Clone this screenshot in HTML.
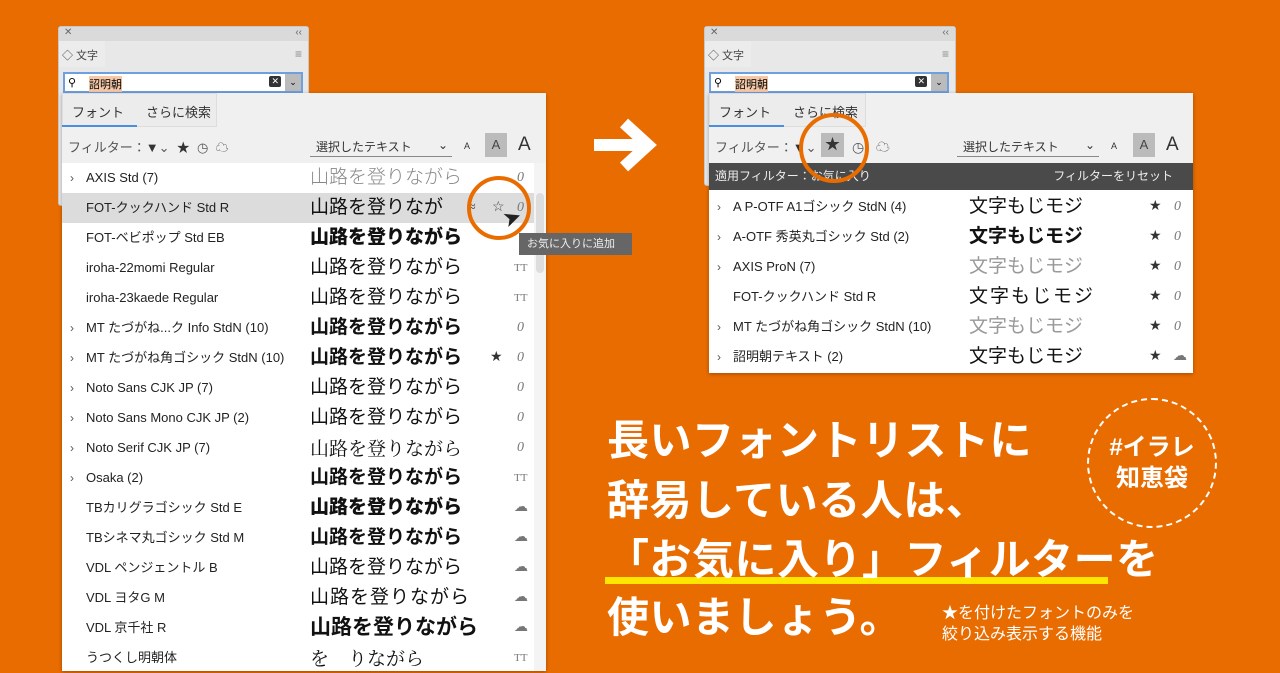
<!DOCTYPE html>
<html><head><meta charset="utf-8"><style>
*{box-sizing:border-box;margin:0;padding:0}
body{width:1280px;height:671px;overflow:hidden;background:#e96c00;font-family:"Liberation Sans","Noto Sans CJK JP",sans-serif;position:relative}
.abs{position:absolute}
.panel{position:absolute;background:#e8e8e8;border:1px solid #c8c8c8;border-radius:3px}
.tbar{height:14px;background:#dadada;font-size:10px;color:#666}
.tab{position:absolute;left:0;top:14px;width:46px;height:26px;background:#ececec;font-size:11px;color:#444;padding:6px 3px;white-space:nowrap}
.search{position:absolute;left:4px;top:45px;width:240px;height:21px;background:#fff;border:2px solid #6ea0e0;font-size:11px}
.pop{position:absolute;background:#f0f0f0;box-shadow:0 1px 4px rgba(0,0,0,.3)}
.row{position:absolute;left:0;height:30px;width:100%;font-size:13px;color:#222;line-height:30px}
.row .ch{position:absolute;left:8px;color:#555;font-size:12px}
.row .nm{position:absolute;left:24px}
.row .sm{position:absolute;font-size:19px;color:#111}
.row .ic{position:absolute;font-size:14px;color:#777;font-style:italic;font-family:"Liberation Serif",serif}
.big{position:absolute;left:607px;color:#fff;font-weight:bold;font-size:42px;line-height:60px;letter-spacing:0.5px;white-space:nowrap}
</style></head><body>

<!-- LEFT -->
<div class="panel" style="left:58px;top:26px;width:251px;height:180px">
 <div class="tbar"><span style="position:absolute;left:5px;top:0">✕</span><span style="position:absolute;right:6px;top:0">‹‹</span></div>
 <div class="tab">◇ 文字</div>
 <div class="abs" style="right:6px;top:20px;color:#888;font-size:12px">≡</div>
 <div class="search"><span style="position:absolute;left:3px;top:2px">⚲</span><span style="position:absolute;left:24px;top:2px;background:#f4c8a8">詔明朝</span><span style="position:absolute;right:20px;top:2px;background:#333;color:#fff;font-size:9px;padding:0 2px;border-radius:2px">✕</span><span style="position:absolute;right:0;top:0;width:16px;height:17px;background:#bbb;font-size:9px;text-align:center;line-height:17px">⌄</span></div>
</div>
<div class="pop" style="left:62px;top:93px;width:484px;height:578px">
 <div class="abs" style="left:0;top:0;width:155px;height:34px;border:1px solid #ddd;background:#ececec"></div>
 <div class="abs" style="left:10px;top:9px;font-size:13px;color:#333">フォント</div>
 <div class="abs" style="left:84px;top:9px;font-size:13px;color:#333">さらに検索</div>
 <div class="abs" style="left:0;top:32px;width:75px;height:2px;background:#4a8ee0"></div>
 <div class="abs" style="left:6px;top:44px;font-size:13px;color:#555">フィルター：<b style="color:#333">▼</b>⌄ &nbsp;<span style="color:#333">★</span> &nbsp;◷ &nbsp;☁</div>
 <div class="abs" style="left:248px;top:42px;width:142px;height:22px;border-bottom:1px solid #888;font-size:12px;color:#333;padding-top:3px;padding-left:6px">選択したテキスト<span style="float:right;margin-right:4px">⌄</span></div>
 <div class="abs" style="left:402px;top:48px;font-size:9px;color:#333">A</div>
 <div class="abs" style="left:423px;top:40px;width:22px;height:24px;background:#bbb;font-size:13px;color:#444;text-align:center;line-height:24px">A</div>
 <div class="abs" style="left:456px;top:41px;font-size:19px;color:#333">A</div>
 <div class="abs" style="left:0;top:70px;width:472px;height:508px;background:#fff"></div>
 <div class="abs" style="left:472px;top:70px;width:12px;height:508px;background:#f4f4f4"></div>
 <div class="abs" style="left:474px;top:100px;width:8px;height:80px;background:#ddd;border-radius:4px"></div>
 <div class="abs" style="left:0;top:100px;width:472px;height:30px;background:#dcdcdc"></div>
 <div style="position:absolute;left:0;top:70px;width:472px">
  <div class="row" style="top:0"><span class="ch">›</span><span class="nm">AXIS Std (7)</span><span class="sm" style="left:248px;color:#888;font-weight:300">山路を登りながら</span><span class="ic" style="left:455px">0</span></div>
  <div class="row" style="top:30px"><span class="nm">FOT-クックハンド Std R</span><span class="sm" style="left:248px">山路を登りなが</span><span class="ic" style="left:406px;font-style:normal;color:#444">≈</span><span class="ic" style="left:430px;font-style:normal;color:#444">☆</span><span class="ic" style="left:455px">0</span></div>
  <div class="row" style="top:60px"><span class="nm">FOT-ベビポップ Std EB</span><span class="sm" style="left:248px;font-weight:900">山路を登りながら</span></div>
  <div class="row" style="top:90px"><span class="nm">iroha-22momi Regular</span><span class="sm" style="left:248px">山路を登りながら</span><span class="ic" style="left:452px;font-style:normal;font-size:11px">TT</span></div>
  <div class="row" style="top:120px"><span class="nm">iroha-23kaede Regular</span><span class="sm" style="left:248px">山路を登りながら</span><span class="ic" style="left:452px;font-style:normal;font-size:11px">TT</span></div>
  <div class="row" style="top:150px"><span class="ch">›</span><span class="nm">MT たづがね...ク Info StdN (10)</span><span class="sm" style="left:248px;font-weight:bold">山路を登りながら</span><span class="ic" style="left:455px">0</span></div>
  <div class="row" style="top:180px"><span class="ch">›</span><span class="nm">MT たづがね角ゴシック StdN (10)</span><span class="sm" style="left:248px;font-weight:bold">山路を登りながら</span><span class="ic" style="left:428px;font-style:normal;color:#333">★</span><span class="ic" style="left:455px">0</span></div>
  <div class="row" style="top:210px"><span class="ch">›</span><span class="nm">Noto Sans CJK JP (7)</span><span class="sm" style="left:248px">山路を登りながら</span><span class="ic" style="left:455px">0</span></div>
  <div class="row" style="top:240px"><span class="ch">›</span><span class="nm">Noto Sans Mono CJK JP (2)</span><span class="sm" style="left:248px">山路を登りながら</span><span class="ic" style="left:455px">0</span></div>
  <div class="row" style="top:270px"><span class="ch">›</span><span class="nm">Noto Serif CJK JP (7)</span><span class="sm" style="left:248px;font-family:'Noto Serif CJK SC',serif">山路を登りながら</span><span class="ic" style="left:455px">0</span></div>
  <div class="row" style="top:300px"><span class="ch">›</span><span class="nm">Osaka (2)</span><span class="sm" style="left:248px;font-weight:bold">山路を登りながら</span><span class="ic" style="left:452px;font-style:normal;font-size:11px">TT</span></div>
  <div class="row" style="top:330px"><span class="nm">TBカリグラゴシック Std E</span><span class="sm" style="left:248px;font-weight:900">山路を登りながら</span><span class="ic" style="left:452px;font-style:normal">☁</span></div>
  <div class="row" style="top:360px"><span class="nm">TBシネマ丸ゴシック Std M</span><span class="sm" style="left:248px;font-weight:bold">山路を登りながら</span><span class="ic" style="left:452px;font-style:normal">☁</span></div>
  <div class="row" style="top:390px"><span class="nm">VDL ペンジェントル B</span><span class="sm" style="left:248px">山路を登りながら</span><span class="ic" style="left:452px;font-style:normal">☁</span></div>
  <div class="row" style="top:420px"><span class="nm">VDL ヨタG M</span><span class="sm" style="left:248px;letter-spacing:1px">山路を登りながら</span><span class="ic" style="left:452px;font-style:normal">☁</span></div>
  <div class="row" style="top:450px"><span class="nm">VDL 京千社 R</span><span class="sm" style="left:248px;font-size:21px;font-weight:bold">山路を登りながら</span><span class="ic" style="left:452px;font-style:normal">☁</span></div>
  <div class="row" style="top:480px"><span class="nm">うつくし明朝体</span><span class="sm" style="left:248px;font-family:'Noto Serif CJK SC',serif">を　りながら</span><span class="ic" style="left:452px;font-style:normal;font-size:11px">TT</span></div>
 </div>
</div>
<div class="abs" style="left:467px;top:176px;width:64px;height:64px;border:4px solid #e96c00;border-radius:50%"></div>
<div class="abs" style="left:503px;top:205px;font-size:22px;color:#222;transform:rotate(-20deg)">➤</div>
<div class="abs" style="left:519px;top:233px;width:113px;height:22px;background:#666;color:#eee;font-size:11px;line-height:22px;padding-left:8px">お気に入りに追加</div>

<!-- arrow -->
<svg class="abs" style="left:590px;top:115px" width="72" height="60"><path d="M4 30H58M34 8L58 30L34 52" stroke="#fff" stroke-width="12" fill="none"/></svg>

<!-- RIGHT -->
<div class="panel" style="left:704px;top:26px;width:252px;height:160px">
 <div class="tbar"><span style="position:absolute;left:5px;top:0">✕</span><span style="position:absolute;right:6px;top:0">‹‹</span></div>
 <div class="tab">◇ 文字</div>
 <div class="abs" style="right:6px;top:20px;color:#888;font-size:12px">≡</div>
 <div class="search"><span style="position:absolute;left:3px;top:2px">⚲</span><span style="position:absolute;left:24px;top:2px;background:#f4c8a8">詔明朝</span><span style="position:absolute;right:20px;top:2px;background:#333;color:#fff;font-size:9px;padding:0 2px;border-radius:2px">✕</span><span style="position:absolute;right:0;top:0;width:16px;height:17px;background:#bbb;font-size:9px;text-align:center;line-height:17px">⌄</span></div>
</div>
<div class="pop" style="left:709px;top:93px;width:484px;height:280px">
 <div class="abs" style="left:0;top:0;width:157px;height:34px;border:1px solid #ddd;background:#ececec"></div>
 <div class="abs" style="left:10px;top:9px;font-size:13px;color:#333">フォント</div>
 <div class="abs" style="left:84px;top:9px;font-size:13px;color:#333">さらに検索</div>
 <div class="abs" style="left:0;top:32px;width:75px;height:2px;background:#4a8ee0"></div>
 <div class="abs" style="left:6px;top:44px;font-size:13px;color:#555">フィルター：<b style="color:#333">▼</b>⌄</div>
 <div class="abs" style="left:112px;top:40px;width:23px;height:24px;background:#bbb;text-align:center;line-height:24px;font-size:15px;color:#333">★</div>
 <div class="abs" style="left:143px;top:44px;font-size:14px;color:#555">◷ &nbsp;&nbsp;☁</div>
 <div class="abs" style="left:248px;top:42px;width:142px;height:22px;border-bottom:1px solid #888;font-size:12px;color:#333;padding-top:3px;padding-left:6px">選択したテキスト<span style="float:right;margin-right:4px">⌄</span></div>
 <div class="abs" style="left:402px;top:48px;font-size:9px;color:#333">A</div>
 <div class="abs" style="left:424px;top:40px;width:22px;height:24px;background:#bbb;font-size:13px;color:#444;text-align:center;line-height:24px">A</div>
 <div class="abs" style="left:457px;top:41px;font-size:19px;color:#333">A</div>
 <div class="abs" style="left:0;top:70px;width:484px;height:27px;background:#4a4a4a;color:#eee;font-size:12px;line-height:27px"><span style="margin-left:6px">適用フィルター：お気に入り</span><span style="position:absolute;right:20px">フィルターをリセット</span></div>
 <div class="abs" style="left:0;top:97px;width:484px;height:183px;background:#fff">
  <div class="row" style="top:2px"><span class="ch">›</span><span class="nm">A P-OTF A1ゴシック StdN (4)</span><span class="sm" style="left:260px">文字もじモジ</span><span class="ic" style="left:440px;font-style:normal;color:#333">★</span><span class="ic" style="left:465px">0</span></div>
  <div class="row" style="top:32px"><span class="ch">›</span><span class="nm">A-OTF 秀英丸ゴシック Std (2)</span><span class="sm" style="left:260px;font-weight:bold">文字もじモジ</span><span class="ic" style="left:440px;font-style:normal;color:#333">★</span><span class="ic" style="left:465px">0</span></div>
  <div class="row" style="top:62px"><span class="ch">›</span><span class="nm">AXIS ProN (7)</span><span class="sm" style="left:260px;color:#999">文字もじモジ</span><span class="ic" style="left:440px;font-style:normal;color:#333">★</span><span class="ic" style="left:465px">0</span></div>
  <div class="row" style="top:92px"><span class="nm">FOT-クックハンド Std R</span><span class="sm" style="left:260px;letter-spacing:2px">文字もじモジ</span><span class="ic" style="left:440px;font-style:normal;color:#333">★</span><span class="ic" style="left:465px">0</span></div>
  <div class="row" style="top:122px"><span class="ch">›</span><span class="nm">MT たづがね角ゴシック StdN (10)</span><span class="sm" style="left:260px;color:#999">文字もじモジ</span><span class="ic" style="left:440px;font-style:normal;color:#333">★</span><span class="ic" style="left:465px">0</span></div>
  <div class="row" style="top:152px"><span class="ch">›</span><span class="nm">詔明朝テキスト (2)</span><span class="sm" style="left:260px">文字もじモジ</span><span class="ic" style="left:440px;font-style:normal;color:#333">★</span><span class="ic" style="left:464px;font-style:normal">☁</span></div>
 </div>
</div>
<div class="abs" style="left:799px;top:113px;width:70px;height:70px;border:4px solid #e96c00;border-radius:50%"></div>

<!-- Big text -->
<div class="abs" style="left:605px;top:577px;width:503px;height:7px;background:#ffe600"></div>
<div class="big" style="top:411px">長いフォントリストに</div>
<div class="big" style="top:471px">辞易している人は、</div>
<div class="big" style="top:530px">「お気に入り」フィルターを</div>
<div class="big" style="top:588px">使いましょう。</div>
<div class="abs" style="left:1087px;top:398px;width:130px;height:130px;border:2px dashed #fff;border-radius:50%;color:#fff;font-size:24px;font-weight:bold;text-align:center;line-height:31px;padding-top:32px">#イラレ<br>知恵袋</div>
<div class="abs" style="left:942px;top:603px;color:#fff;font-size:16px;line-height:21px">★を付けたフォントのみを<br>絞り込み表示する機能</div>
</body></html>
